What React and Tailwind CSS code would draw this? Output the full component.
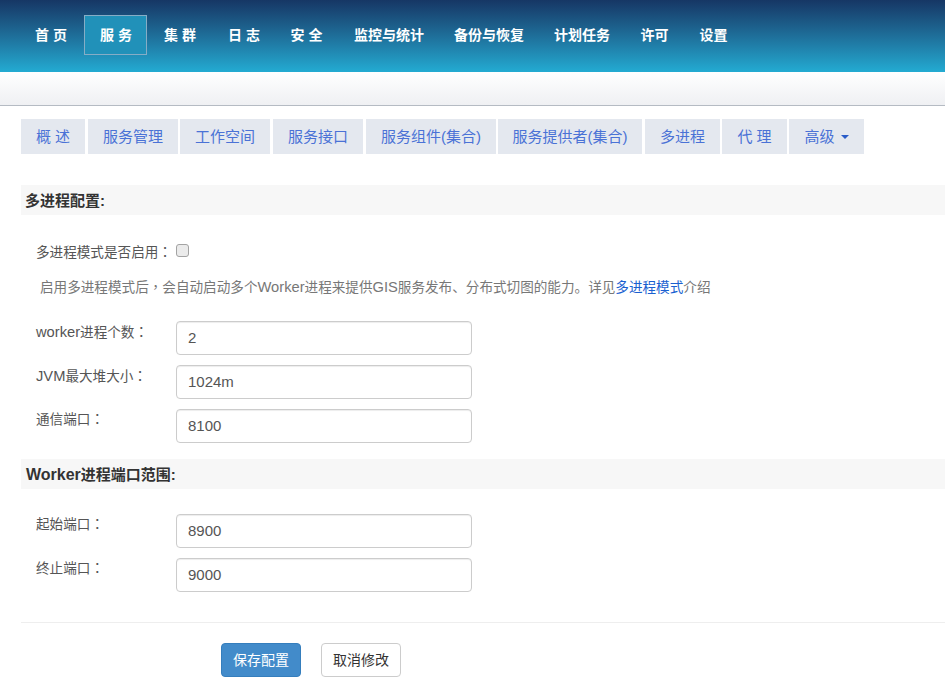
const F = '"Liberation Sans","Noto Sans CJK SC",sans-serif';

const NAV = [
  ['首 页', 'w-[64px] pr-[2px]', false],
  ['服 务', 'w-[63px] pl-[1px]', true],
  ['集 群', 'w-[65px] pl-[1px]', false],
  ['日 志', 'w-[64px]', false],
  ['安 全', 'w-[63px] pr-[2px]', false],
  ['监控与统计', 'w-[100px]', false],
  ['备份与恢复', 'w-[100px]', false],
  ['计划任务', 'w-[86px]', false],
  ['许可', 'w-[59px]', false],
  ['设置', 'w-[59px]', false],
];

const TABS = [
  ['概 述', 'w-[64px]', 'mr-[3px]'],
  ['服务管理', 'w-[90px]', 'mr-[2px]'],
  ['工作空间', 'w-[90px]', 'mr-[3px]'],
  ['服务接口', 'w-[90px]', 'mr-[3px]'],
  ['服务组件(集合)', 'w-[130px]', 'mr-[2px]'],
  ['服务提供者(集合)', 'w-[144px]', 'mr-[3px]'],
  ['多进程', 'w-[75px]', 'mr-[2px]'],
  ['代 理', 'w-[65px]', 'mr-[2px]'],
];

function Latin({ children }) {
  return <span className="text-[14.7px]">{children}</span>;
}

function Mark({ children }) {
  return <span className="[font-family:'Noto_Sans_CJK_TC',sans-serif]">{children}</span>;
}

function Field({ label, value, labelClass = 'leading-[20px]' }) {
  return (
    <div className="flex items-start">
      <label className={`w-[155px] pl-[15px] text-[13.6px] text-[#555555] ${labelClass}`}>
        {label}
        <Mark>：</Mark>
      </label>
      <input
        readOnly
        value={value}
        className="h-[34px] w-[296px] rounded-[4px] border border-[#cccccc] bg-white pb-[2px] pl-[11px] pr-3 text-[15px] text-[#555555] shadow-[inset_0_1px_1px_rgba(0,0,0,0.075)] outline-none"
        style={{ fontFamily: F }}
      />
    </div>
  );
}

function SectionHead({ children, className }) {
  return (
    <div className={`h-[30px] bg-[#f7f7f7] pl-1 text-[15px] font-bold leading-[32px] text-[#333333] ${className}`}>{children}</div>
  );
}

export default function App() {
  return (
    <div className="h-[695px] w-[945px] overflow-hidden bg-white" style={{ fontFamily: F }}>
      <header className="flex h-[72px] items-start bg-gradient-to-b from-[#163765] to-[#23abd2] pl-[20px] pt-[15px]">
        {NAV.map(([text, w, active]) => (
          <a
            key={text}
            className={`flex h-[40px] items-center justify-center text-[14px] font-bold text-white ${w} ${active ? 'border border-[#86adc6] bg-[#2191b9]' : ''}`}
          >
            {text}
          </a>
        ))}
      </header>
      <div className="h-[34px] border-b border-[#b5bbc3] bg-gradient-to-b from-white to-[#eff0f3]" />
      <main className="pl-[21px]">
        <nav className="mt-[13px] flex">
          {TABS.map(([text, w, mr]) => (
            <a key={text} className={`flex h-[35px] items-center justify-center bg-[#e4e8ef] pt-[1px] text-[15px] text-[#4a72d6] ${w} ${mr}`}>
              {text}
            </a>
          ))}
          <a className="flex h-[35px] w-[75px] items-center justify-center gap-[6px] bg-[#e4e8ef] pt-[1px] text-[15px] text-[#4a72d6]">
            高级
            <span className="h-0 w-0 border-x-[4px] border-t-[4px] border-x-transparent border-t-[#2a5cc8]" />
          </a>
        </nav>

        <SectionHead className="mt-[31px]">多进程配置:</SectionHead>

        <div className="mt-[26px] flex h-[20px] items-start pl-[15px] text-[13.6px] leading-[20px] text-[#555555]">
          <span>
            多进程模式是否启用<Mark>：</Mark>
          </span>
          <input
            type="checkbox"
            className="ml-[4px] mt-[3px] h-[13px] w-[13px] appearance-none rounded-[3px] border border-[#a3a3a3] bg-[#ebebeb]"
          />
        </div>
        <p className="mt-[15px] h-[20px] pl-[19px] text-[13.6px] leading-[20px] text-[#777777]">
          启用多进程模式后<Mark>，</Mark>会自动启动多个<Latin>Worker</Latin>进程来提供<Latin>GIS</Latin>服务发布、分布式切图的能力。详见<a className="text-[#1a5fd0]">多进程模式</a>介绍
        </p>

        <div className="mt-[25px] flex flex-col gap-[10px]">
          <Field label={<><Latin>worker</Latin>进程个数</>} value="2" />
          <Field label={<><Latin>JVM</Latin>最大堆大小</>} value="1024m" />
          <Field label="通信端口" value="8100" labelClass="leading-[18px]" />
        </div>

        <SectionHead className="mt-[16px]">
          <span className="ml-[1px] text-[16px]">Worker</span>进程端口范围:
        </SectionHead>

        <div className="mt-[25px] flex flex-col gap-[10px]">
          <Field label="起始端口" value="8900" labelClass="leading-[18px]" />
          <Field label="终止端口" value="9000" labelClass="leading-[18px]" />
        </div>

        <hr className="mt-[30px] border-t border-[#eeeeee]" />

        <div className="mt-[20px] flex gap-[20px] pl-[200px]">
          <button className="h-[34px] w-[80px] rounded-[4px] border border-[#357ebd] bg-[#428bca] text-[14px] text-white">保存配置</button>
          <button className="h-[34px] w-[80px] rounded-[4px] border border-[#cccccc] bg-white text-[14px] text-[#333333]">取消修改</button>
        </div>
      </main>
    </div>
  );
}
